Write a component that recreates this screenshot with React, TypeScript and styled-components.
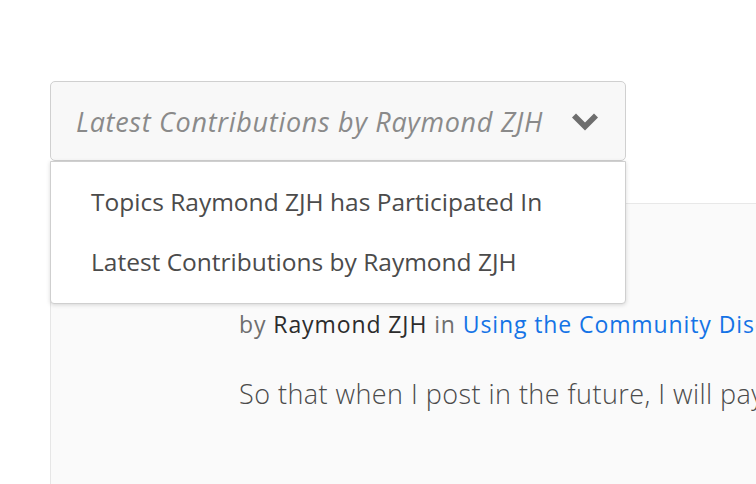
import styled, { createGlobalStyle } from 'styled-components'

const GlobalStyle = createGlobalStyle`
    html, body {
        margin: 0;
        padding: 0;
        background: #ffffff;
        overflow: hidden;
    }
    body {
        font-family: "Open Sans", Lato, sans-serif;
        color: #4b4b4b;
    }
`

const Page = styled.div`
    width: 756px;
    height: 484px;
    padding: 81px 0 0 50px;
    box-sizing: border-box;
    overflow: hidden;
`

const SelectWrap = styled.div`
    position: relative;
    width: 576px;
    z-index: 2;
`

const SelectBox = styled.div`
    height: 80px;
    box-sizing: border-box;
    display: flex;
    align-items: center;
    justify-content: space-between;
    padding: 0 26px 0 25px;
    background: #f8f8f8;
    border: 1px solid #d0d0d0;
    border-radius: 5px;
    cursor: pointer;
`

const SelectText = styled.span`
    font-size: 27px;
    font-style: italic;
    letter-spacing: 0.7px;
    color: #8a8a8a;
`

const Chevron = styled.svg`
    width: 28px;
    height: 20px;
    fill: #6e6e6e;
`

const Menu = styled.ul`
    position: absolute;
    top: 80px;
    left: 0;
    width: 576px;
    box-sizing: border-box;
    margin: 0;
    padding: 9px 0 12px;
    list-style: none;
    background: #ffffff;
    border: 1px solid #cfcfcf;
    border-radius: 0 0 4px 4px;
    box-shadow: 0 1px 4px rgba(0, 0, 0, 0.15);
`

const MenuItem = styled.li`
    height: 60px;
    display: flex;
    align-items: center;
    padding-left: 40px;
    font-size: 24.5px;
    color: #4b4b4b;
    cursor: pointer;
`

const Panel = styled.div`
    margin-top: 42px;
    width: 760px;
    height: 300px;
    background: #fafafa;
    border-top: 1px solid #e8e8e8;
    border-left: 1px solid #e6e6e6;
    padding: 104px 0 0 188px;
    box-sizing: border-box;
`

const Byline = styled.div`
    font-size: 23px;
    letter-spacing: 0.9px;
    color: #6e6e6e;
    white-space: nowrap;
`

const Author = styled.span`
    color: #2c2c2c;
    font-weight: 500;
`

const BoardLink = styled.a`
    color: #1473e6;
    text-decoration: none;
`

const Body = styled.p`
    margin: 35px 0 0;
    font-size: 27px;
    font-weight: 300;
    letter-spacing: 0.45px;
    color: #4b4b4b;
    white-space: nowrap;
`

export default function App() {
    return (
        <>
            <GlobalStyle />
            <Page>
                <SelectWrap>
                    <SelectBox>
                        <SelectText>Latest Contributions by Raymond ZJH</SelectText>
                        <Chevron viewBox="0 0 28 20">
                            <path d="M1 6.5 L5 2.5 L14 11.5 L23 2.5 L27 6.5 L14 19.5 Z" />
                        </Chevron>
                    </SelectBox>
                    <Menu>
                        <MenuItem>Topics Raymond ZJH has Participated In</MenuItem>
                        <MenuItem>Latest Contributions by Raymond ZJH</MenuItem>
                    </Menu>
                </SelectWrap>
                <Panel>
                    <Byline>
                        by <Author>Raymond ZJH</Author> in{' '}
                        <BoardLink href="#">Using the Community Discussions</BoardLink>
                    </Byline>
                    <Body>So that when I post in the future, I will pay more attention to it.</Body>
                </Panel>
            </Page>
        </>
    )
}
